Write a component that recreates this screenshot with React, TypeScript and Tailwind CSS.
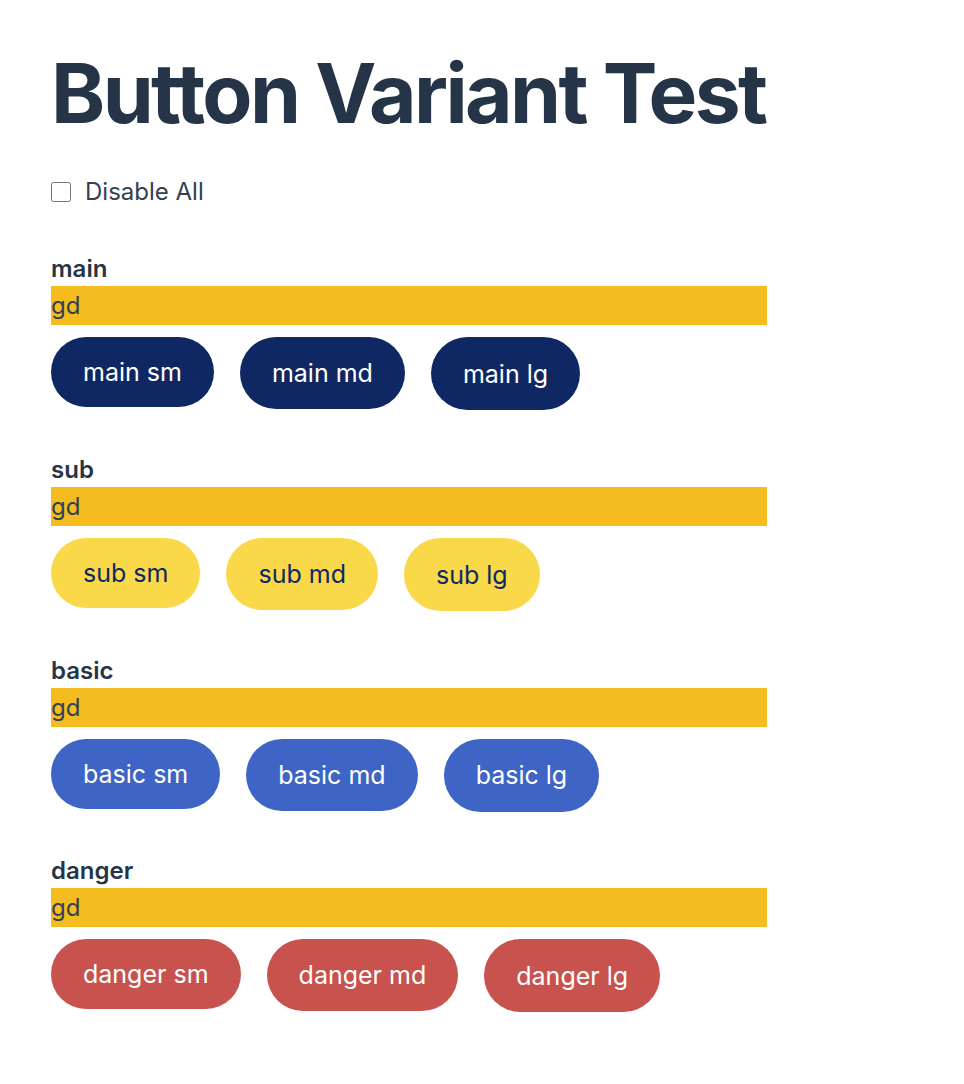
import { useState } from "react";

type Variant = "main" | "sub" | "basic" | "danger";
type Size = "sm" | "md" | "lg";

const variantClass: Record<Variant, string> = {
  main: "bg-[#0f2864] text-white",
  sub: "bg-[#f9d949] text-[#0f2864]",
  basic: "bg-[#3e64c6] text-white",
  danger: "bg-[#c8524d] text-white",
};

const sizeClass: Record<Size, string> = {
  sm: "px-8 py-[17px]",
  md: "px-8 py-[18px]",
  lg: "px-8 py-[18.5px]",
};

const Button = ({ variant, size, disabled }: { variant: Variant; size: Size; disabled: boolean }) => {
  return (
    <button
      disabled={disabled}
      className={`rounded-full text-[25px] leading-9 ${variantClass[variant]} ${sizeClass[size]} disabled:opacity-50`}
    >
      {variant} {size}
    </button>
  );
};

const variants: Variant[] = ["main", "sub", "basic", "danger"];
const sizes: Size[] = ["sm", "md", "lg"];

const App = () => {
  const [disableAll, setDisableAll] = useState(false);

  return (
    <div className="min-h-screen bg-white px-[51px] pt-[45px] text-[#253446] font-['Inter',sans-serif]">
      <h1 className="text-[82px] font-bold leading-[1.2] tracking-[-2.6px]">Button Variant Test</h1>

      <label className="mt-[31px] flex items-center gap-[14px] text-[24px] leading-9 text-[#334155]">
        <input
          type="checkbox"
          checked={disableAll}
          onChange={(e) => setDisableAll(e.target.checked)}
          className="h-5 w-5"
        />
        Disable All
      </label>

      {/* one block per variant */}
      <div className="mt-[42px] flex flex-col gap-[42.7px]">
        {variants.map((variant) => (
          <div key={variant} className="w-[716px]">
            <div className="text-[24px] font-semibold leading-[34px]">{variant}</div>
            <div className="h-[39px] bg-[#f4bc1f] text-[24px] leading-[39px] text-[#334155]">gd</div>
            <div className="mt-3 flex items-start gap-[26px]">
              {sizes.map((size) => (
                <Button key={size} variant={variant} size={size} disabled={disableAll} />
              ))}
            </div>
          </div>
        ))}
      </div>
    </div>
  );
};

export default App;
